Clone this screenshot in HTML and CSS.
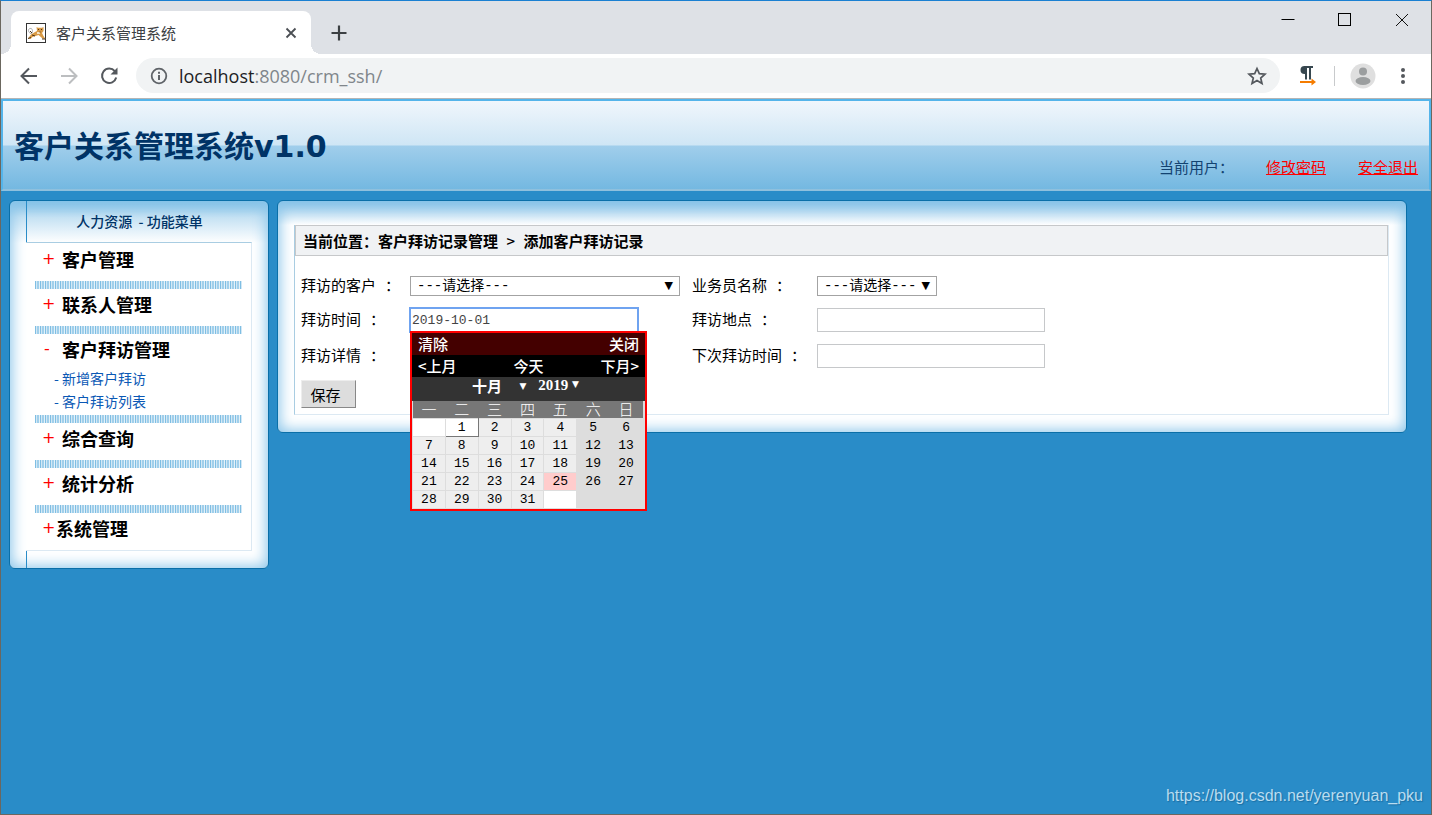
FILE: index.html
```html
<!DOCTYPE html>
<html lang="zh-CN">
<head>
<meta charset="utf-8">
<title>客户关系管理系统</title>
<link rel="stylesheet" href="styles.css">
</head>
<body>
<div class="window">
  <div class="tabstrip">
    <div class="tab">
      <svg class="favicon" viewBox="0 0 20 20" width="20" height="20" aria-hidden="true">
        <rect x=".5" y=".5" width="19" height="19" fill="#fff" stroke="#333"/>
        <path d="M6 11C2 10 1.500 6 4 5.500S7 8 6 10" fill="none" stroke="#aaa"/>
        <path d="M2 15.500l3-4 4-2.500 2-1-.5-4 1.500.8h4l1.500-.8v4l-1.500 2 1.500 3 2 3-3-.5-4-3.500-3 1-3 1-2 2z" fill="#d99a45"/>
        <path d="M2 15.500l3-1M16 16h3M6 12l3 1" stroke="#4a351d" fill="none"/>
        <path d="M11 9h3v2h-3z" fill="#f6e3c4"/>
        <path d="M12 6.500h1M15 6.500h1M13.500 9h1M4 8l2 2" stroke="#4a351d" fill="none"/>
      </svg>
      <span class="tab-title">客户关系管理系统</span>
      <button class="icon-btn tab-close" aria-label="关闭标签页">
        <svg viewBox="0 0 12 12" width="12" height="12"><path d="M1.500 1.500l9 9M10.500 1.500l-9 9" stroke="#4b4f54" stroke-width="1.800"/></svg>
      </button>
    </div>
    <button class="icon-btn new-tab" aria-label="新标签页">
      <svg viewBox="0 0 16 16" width="16" height="16"><path d="M8 .5v15M.5 8h15" stroke="#3c4043" stroke-width="2.200"/></svg>
    </button>
    <div class="win-controls">
      <button class="icon-btn" aria-label="最小化"><svg viewBox="0 0 14 14" width="14" height="14"><path d="M.5 6.500h13" stroke="#000"/></svg></button>
      <button class="icon-btn" aria-label="最大化"><svg viewBox="0 0 14 14" width="14" height="14"><rect x=".5" y=".5" width="12" height="12" fill="none" stroke="#000"/></svg></button>
      <button class="icon-btn" aria-label="关闭"><svg viewBox="0 0 14 14" width="14" height="14"><path d="M1 1l12 12M13 1L1 13" stroke="#111"/></svg></button>
    </div>
  </div>

  <div class="toolbar">
    <div class="nav-buttons">
      <button class="icon-btn" aria-label="后退"><svg viewBox="0 0 18 18" width="18" height="18"><path d="M17 9H2M9 1.500L1.500 9 9 16.500" fill="none" stroke="#54585d" stroke-width="2"/></svg></button>
      <button class="icon-btn" aria-label="前进"><svg viewBox="0 0 18 18" width="18" height="18"><path d="M1 9h15M9 1.500L16.500 9 9 16.500" fill="none" stroke="#bcbec0" stroke-width="2"/></svg></button>
      <button class="icon-btn" aria-label="刷新"><svg viewBox="0 0 18 18" width="18" height="18"><path d="M14.800 4.200A7.200 7.200 0 1 0 16.200 10.500" fill="none" stroke="#54585d" stroke-width="2"/><path d="M17.500.5v7h-7z" fill="#54585d"/></svg></button>
    </div>
    <div class="omnibox">
      <svg viewBox="0 0 18 18" width="18" height="18" aria-hidden="true"><circle cx="9" cy="9" r="7.300" fill="none" stroke="#5f6368" stroke-width="1.800"/><path d="M9 8v5M9 4.700v2" stroke="#5f6368" stroke-width="2"/></svg>
      <span class="url"><b>localhost</b>:8080/crm_ssh/</span>
      <button class="icon-btn" aria-label="收藏"><svg viewBox="0 0 20 20" width="20" height="20"><path d="M10 2.500l2.300 5.200 5.700.5-4.300 3.800 1.300 5.600-5-3-5 3 1.300-5.600L2 8.200l5.700-.5z" fill="none" stroke="#54585d" stroke-width="1.700"/></svg></button>
    </div>
    <div class="extensions">
      <button class="icon-btn" aria-label="扩展程序"><svg viewBox="0 0 18 21" width="18" height="21"><path d="M8 1H5.500a4 4 0 0 0 0 8H8z" fill="#37474f"/><path d="M7 1v13.500M11 1v13.500M5 2h9" stroke="#37474f" stroke-width="2" fill="none"/><path d="M1 17h13" stroke="#f57c00" stroke-width="2"/><path d="M12.500 13.500L17 17l-4.500 3.500z" fill="#f57c00"/></svg></button>
      <span class="divider"></span>
      <button class="icon-btn" aria-label="用户"><svg viewBox="0 0 26 26" width="26" height="26"><circle cx="13" cy="13" r="12.500" fill="#dfdfdf"/><circle cx="13" cy="8.500" r="4" fill="#9b9e9f"/><ellipse cx="13" cy="18" rx="7.500" ry="4" fill="#9b9e9f"/></svg></button>
      <button class="icon-btn menu-dots" aria-label="菜单"><svg viewBox="0 0 4 16" width="4" height="16" fill="#54585d"><circle cx="2" cy="2" r="2"/><circle cx="2" cy="8" r="2"/><circle cx="2" cy="14" r="2"/></svg></button>
    </div>
  </div>

  <div class="page">
    <header class="banner">
      <h1>客户关系管理系统v1.0</h1>
      <div class="user-links">
        <span class="current-user">当前用户：</span>
        <a href="#">修改密码</a>
        <a href="#">安全退出</a>
      </div>
    </header>

    <div class="columns">
      <nav class="panel sidebar">
        <h2 class="sidebar-title">人力资源&nbsp; - 功能菜单</h2>
        <ul class="menu">
          <li><div class="menu-head"><span class="sign">+</span><a href="#">客户管理</a></div></li>
          <li><div class="menu-head"><span class="sign">+</span><a href="#">联系人管理</a></div></li>
          <li>
            <div class="menu-head open"><span class="sign minus">-</span><a href="#">客户拜访管理</a></div>
            <ul class="submenu">
              <li><a href="#">- 新增客户拜访</a></li>
              <li><a href="#">- 客户拜访列表</a></li>
            </ul>
          </li>
          <li><div class="menu-head"><span class="sign">+</span><a href="#">综合查询</a></div></li>
          <li><div class="menu-head"><span class="sign">+</span><a href="#">统计分析</a></div></li>
          <li><div class="menu-head tight"><span class="sign">+</span><a href="#">系统管理</a></div></li>
        </ul>
        <div class="sidebar-foot"></div>
      </nav>

      <main class="panel content">
        <div class="content-inner">
          <h2 class="crumb">当前位置<span class="mid">：</span>客户拜访记录管理 <span class="gt">&gt;</span> 添加客户拜访记录</h2>
          <form class="visit-form">
            <label for="customer">拜访的客户 ：</label>
            <div class="select-box wide">
              <select id="customer"><option>---请选择---</option></select><span class="arrow">▼</span>
            </div>
            <label for="clerk">业务员名称 ：</label>
            <div class="select-box">
              <select id="clerk"><option>---请选择---</option></select><span class="arrow">▼</span>
            </div>

            <label for="time">拜访时间 ：</label>
            <div class="date-box">
              <input class="focused" id="time" type="text" value="2019-10-01">
              <div class="calendar">
                <div class="cal-row cal-top"><button type="button">清除</button><button type="button">关闭</button></div>
                <div class="cal-row cal-nav"><button type="button">&lt;上月</button><button type="button">今天</button><button type="button">下月&gt;</button></div>
                <div class="cal-pick">
                  <button type="button" class="month">十月 <span>▼</span></button>
                  <button type="button" class="year">2019 <span>▼</span></button>
                </div>
                <table class="days">
                  <thead><tr><th>一</th><th>二</th><th>三</th><th>四</th><th>五</th><th>六</th><th>日</th></tr></thead>
                  <tbody>
                    <tr><td class="blank"></td><td class="selected">1</td><td>2</td><td>3</td><td>4</td><td class="rest">5</td><td class="rest">6</td></tr>
                    <tr><td>7</td><td>8</td><td>9</td><td>10</td><td>11</td><td class="rest">12</td><td class="rest">13</td></tr>
                    <tr><td>14</td><td>15</td><td>16</td><td>17</td><td>18</td><td class="rest">19</td><td class="rest">20</td></tr>
                    <tr><td>21</td><td>22</td><td>23</td><td>24</td><td class="today">25</td><td class="rest">26</td><td class="rest">27</td></tr>
                    <tr><td>28</td><td>29</td><td>30</td><td>31</td><td class="blank"></td><td class="rest"></td><td class="rest"></td></tr>
                  </tbody>
                </table>
              </div>
            </div>
            <label for="place">拜访地点 ：</label>
            <input id="place" type="text">

            <label for="detail">拜访详情 ：</label>
            <input id="detail" type="text">
            <label for="next">下次拜访时间 ：</label>
            <input id="next" type="text">

            <button type="submit" class="save">保存</button>
          </form>
        </div>
      </main>
    </div>
    <footer class="watermark">https://blog.csdn.net/yerenyuan_pku</footer>
  </div>
</div>
</body>
</html>
```
FILE: styles.css
```css
* { box-sizing: border-box; }

body {
  margin: 0;
  font-family: "Noto Sans CJK SC", sans-serif;
  font-size: 15px;
  color: #000;
}

button { font: inherit; color: inherit; background: none; border: 0; padding: 0; margin: 0; }
h1, h2 { margin: 0; }
ul { list-style: none; margin: 0; padding: 0; }
a { text-decoration: none; color: inherit; }

.window {
  min-height: 100vh;
  display: flex;
  flex-direction: column;
  border: 1px solid #6b675f;
  border-top-color: #1a80d2;
}

.icon-btn { display: inline-flex; align-items: center; justify-content: center; }
.icon-btn svg { display: block; }

/* Browser frame */
.tabstrip {
  display: flex;
  height: 53px;
  padding: 10px 0 0 10px;
  background: #dee1e6;
}
.tab {
  position: relative;
  display: flex;
  align-items: center;
  width: 300px;
  padding: 0 14px 0 15px;
  background: #fff;
  border-radius: 8px 8px 0 0;
}
.tab::before, .tab::after {
  content: "";
  position: absolute;
  bottom: 0;
  width: 10px;
  height: 10px;
}
.tab::before { right: 100%; background: radial-gradient(circle at 0 0, transparent 10px, #fff 10px); }
.tab::after { left: 100%; background: radial-gradient(circle at 100% 0, transparent 10px, #fff 10px); }
.tab-title { flex: 1; margin-left: 10px; color: #3c4043; }
.new-tab { margin-left: 20px; height: 43px; }
.win-controls { display: flex; gap: 43px; height: 18px; margin-left: auto; padding-right: 22px; }

.toolbar {
  display: flex;
  align-items: center;
  height: 45px;
  padding: 0 26px 1px 19px;
  border-bottom: 1px solid #b5b5b5;
  background: #fff;
}
.nav-buttons { display: flex; gap: 22px; margin-right: 18px; }
.omnibox {
  flex: 1;
  display: flex;
  align-items: center;
  height: 35px;
  padding: 0 13px 0 14px;
  border-radius: 18px;
  background: #f1f3f4;
}
.url { flex: 1; margin-left: 11px; font: 18px "Open Sans", sans-serif; color: #80868b; }
.url b { font-weight: 400; color: #202124; }
.extensions { display: flex; align-items: center; margin-left: 19px; }
.divider { width: 1px; height: 20px; margin: 0 15px 0 17px; background: #c8cacc; }
.menu-dots { margin-left: 25px; }

/* Application page */
.page { flex: 1; display: flex; flex-direction: column; background: #298cc8; }

.banner {
  display: flex;
  justify-content: space-between;
  height: 92px;
  padding: 0 11px;
  border: 2px solid #54b4ea;
  border-bottom-color: #8fc0dd;
  background: linear-gradient(#f0f6fc, #cfe6f5 44px, #a0ceeb 45px, #74b8e1);
}
.banner h1 {
  padding-top: 26px;
  font: bold 30px/40px "DejaVu Sans", "Noto Sans CJK SC", sans-serif;
  color: #036;
}
.user-links { align-self: flex-end; display: flex; gap: 32px; padding-bottom: 10px; line-height: 24px; }
.current-user { color: #134371; }
.user-links a { color: #f00; text-decoration: underline; }

.columns { display: flex; align-items: flex-start; gap: 8px; padding: 9px 24px 0 8px; }
.panel {
  border: 1px solid #0a6fa8;
  border-radius: 6px;
  background: #fff;
  box-shadow: inset 0 0 14px 2px #8cc6ea;
}

.sidebar { width: 260px; background: linear-gradient(#7fbfe5, #c4e1f3 16px, #fff 42px); }
.sidebar-title {
  margin: 0 0 0 16px;
  padding-right: 16px;
  border-left: 1px solid #298cc8;
  font-size: 14px;
  font-weight: 500;
  line-height: 41px;
  text-align: center;
  color: #036;
}
.menu {
  margin: 0 16px;
  padding: 1px 9px 0 9px;
  border: 1px solid #dce9f3;
  border-left: 0;
  border-top-color: #a9cde2;
}
.menu > li:not(:last-child)::after {
  content: "";
  display: block;
  height: 8px;
  background: repeating-linear-gradient(90deg, #7fbee3 0 1px, #d3e8f5 1px 2px, #a0cfeb 2px 4px, #e3f1f9 4px 5px);
}
.menu-head { display: flex; height: 37px; padding-left: 7px; line-height: 30px; }
.menu-head a { font-size: 18px; font-weight: 700; }
.sign { width: 20px; font: 16px/30px "DejaVu Sans", sans-serif; color: #f00; }
.minus { padding-left: 2px; }
.tight .sign { width: 14px; }
.open { height: 33px; }
.submenu { padding: 0 0 2px 19px; }
.submenu a { display: block; font-size: 14px; line-height: 23px; color: #0a58b5; }
.sidebar-foot { height: 17px; margin-left: 16px; border-left: 1px solid #298cc8; }

.content { flex: 1; padding: 24px 17px 17px 16px; background: linear-gradient(#84c0e6, #fff 24px); }
.content-inner { border: 1px solid #dce9f3; border-top: 0; border-left-color: #a9cde2; background: #fff; }
.crumb {
  padding-left: 7px;
  border: 1px solid #c6c8ca;
  background: #f0f2f4;
  font-size: 15px;
  font-weight: 700;
  line-height: 29px;
}
.mid { font-family: "Noto Sans CJK TC", sans-serif; }
.gt { margin: 0 5px; font-weight: 500; }

.visit-form {
  display: grid;
  grid-template-columns: 101px 274px 117px 1fr;
  grid-template-rows: 35px 34px 37px auto;
  column-gap: 8px;
  align-items: center;
  padding: 12px 6px 6px 6px;
}
.visit-form label { padding-bottom: 2px; }
.visit-form label, .select-box select { font-family: "Liberation Mono", "Noto Sans CJK SC", monospace; }
.visit-form input {
  width: 228px;
  height: 24px;
  padding: 0 2px;
  border: 1px solid #c6c8ca;
  font: 13px "Liberation Mono", monospace;
  color: #444;
}
.visit-form .focused { outline: 1px solid #6fa3f0; border-color: #6fa3f0; padding: 0 1px; }
.select-box { display: inline-grid; justify-self: start; width: 120px; align-items: center; }
.select-box.wide { width: 270px; }
.select-box > * { grid-area: 1 / 1; }
.select-box select {
  appearance: none;
  height: 20px;
  padding: 0 6px;
  border: 1px solid #a3a3a3;
  border-radius: 0;
  background: #fff;
  font-size: 14px;
  line-height: 18px;
  color: #000;
}
.arrow { justify-self: end; padding-right: 7px; font: 11px/20px "DejaVu Sans", sans-serif; pointer-events: none; }
.save {
  justify-self: start;
  width: 55px;
  height: 28px;
  margin-top: 6px;
  padding-right: 6px;
  border: 1px solid #ededed;
  border-right-color: #888;
  border-bottom-color: #888;
  background: #ddd;
}

/* Date picker */
.date-box { position: relative; display: flex; }
.calendar {
  position: absolute;
  top: 23px;
  left: 0;
  z-index: 1;
  width: 237px;
  border: 2px solid #f00;
  background: #ddd;
  color: #fff;
}
.cal-row { display: flex; justify-content: space-between; padding: 0 6px; font-weight: 500; line-height: 22px; }
.cal-top { background: #400; }
.cal-nav { background: #000; }
.cal-pick {
  display: flex;
  align-items: flex-start;
  justify-content: center;
  gap: 12px;
  padding-right: 6px;
  height: 24px;
  background: #333;
  font-weight: 700;
  line-height: 17px;
}
.cal-pick span { font: 9px/9px "DejaVu Sans", sans-serif; vertical-align: 3px; }
.month span { margin-left: 14px; }
.year { font-family: "Liberation Serif", serif; }
.days { width: 231px; border-collapse: collapse; table-layout: fixed; line-height: 17px; text-align: center; }
.days th { height: 17px; padding: 0 0 2px; background: #777; font-weight: 300; line-height: 15px; }
.days td {
  height: 18px;
  padding: 0;
  border: 1px solid #ddd;
  background: #eee;
  font: 13px/17px "Liberation Mono", monospace;
  color: #000;
}
.days .blank { background: #fff; }
.days .rest { background: #ddd; }
.days .today { background: #fcc; }
.days .selected { background: #fff; border-right-color: #777; border-bottom: 1px solid #777; }

.watermark {
  margin-top: auto;
  padding: 0 8px 7px;
  font: 16px/22px "Liberation Sans", sans-serif;
  text-align: right;
  color: #b9dcf0;
  text-shadow: 1px 1px 1px #1c6fa3;
}
```
